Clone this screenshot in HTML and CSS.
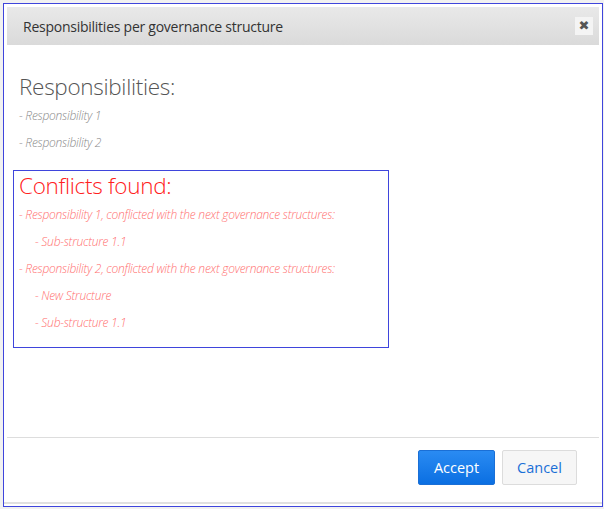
FILE: index.html
```html
<!DOCTYPE html>
<html>
<head>
<meta charset="utf-8">
<link rel="stylesheet" href="styles.css">
</head>
<body>
<div class="modal">
  <div class="modal-header">
    <span class="modal-title">Responsibilities per governance structure</span>
    <button class="close-btn" type="button">&#10006;</button>
  </div>
  <div class="modal-body">
    <h2 class="section-title">Responsibilities:</h2>
    <div class="item">- Responsibility 1</div>
    <div class="item">- Responsibility 2</div>
    <div class="conflicts">
      <h2 class="section-title conflict-title">Conflicts found:</h2>
      <div class="item conflict-item">- Responsibility 1, conflicted with the next governance structures:</div>
      <div class="item conflict-item sub">- Sub-structure 1.1</div>
      <div class="item conflict-item">- Responsibility 2, conflicted with the next governance structures:</div>
      <div class="item conflict-item sub">- New Structure</div>
      <div class="item conflict-item sub">- Sub-structure 1.1</div>
    </div>
  </div>
  <div class="modal-footer">
    <button class="btn btn-primary" type="button">Accept</button>
    <button class="btn btn-default" type="button">Cancel</button>
  </div>
  <div class="bottom-line"></div>
</div>
</body>
</html>
```
FILE: styles.css
```css
html, body {
  margin: 0;
  padding: 0;
  background: #f1f1f1;
}
body {
  font-family: "Open Sans", "Noto Sans", sans-serif;
  padding: 3px;
}
.modal {
  box-sizing: border-box;
  width: 600px;
  height: 504px;
  border: 1px solid #3f45dc;
  background: #ffffff;
  display: flex;
  flex-direction: column;
  padding: 3px 0 0 0;
}
.modal-header {
  margin: 0 3px;
  height: 38px;
  box-sizing: border-box;
  background: linear-gradient(#e9e9e9, #dadada);
  display: flex;
  align-items: center;
  justify-content: space-between;
  padding: 0 6px 0 16px;
}
.modal-title {
  font-size: 14px;
  color: #333;
  letter-spacing: -0.25px;
}
.close-btn {
  width: 18px;
  height: 18px;
  border: none;
  padding: 0;
  background: #f4f4f4;
  color: #555;
  font-size: 13px;
  line-height: 18px;
  text-align: center;
  font-family: "DejaVu Sans", sans-serif;
}
.modal-body {
  flex: 1;
  padding: 27px 0 0 15px;
}
.section-title {
  margin: 0;
  font-size: 22.5px;
  font-weight: 300;
  line-height: 30px;
  color: #555;
  letter-spacing: -0.3px;
}
.item {
  font-size: 12px;
  font-style: italic;
  font-weight: 300;
  line-height: 27px;
  color: #8a8a8a;
  letter-spacing: -0.25px;
}
.conflicts {
  box-sizing: border-box;
  margin: 14px 0 0 -6px;
  width: 376px;
  border: 1px solid #3f45dc;
  padding: 0 5px 11px 5px;
}
.conflict-title {
  color: #ff2020;
}
.conflict-item {
  color: #ff7070;
}
.sub {
  padding-left: 16px;
}
.modal-footer {
  margin: 0 3px;
  border-top: 1px solid #dddddd;
  padding: 12px 22px 17px 0;
  display: flex;
  justify-content: flex-end;
  gap: 7px;
}
.btn {
  height: 35px;
  box-sizing: border-box;
  border-radius: 2px;
  font-family: "Open Sans", "Noto Sans", sans-serif;
  font-size: 14.5px;
  padding: 0;
}
.btn-primary {
  width: 77px;
  background: linear-gradient(#2a8bf2, #0b6fe2);
  border: 1px solid #1a6fd6;
  color: #ffffff;
}
.btn-default {
  width: 75px;
  background: #f6f6f6;
  border: 1px solid #dcdcdc;
  color: #1a6fd6;
}
.bottom-line {
  height: 2px;
  background: #e0e0e0;
  margin-bottom: 2px;
}
```
